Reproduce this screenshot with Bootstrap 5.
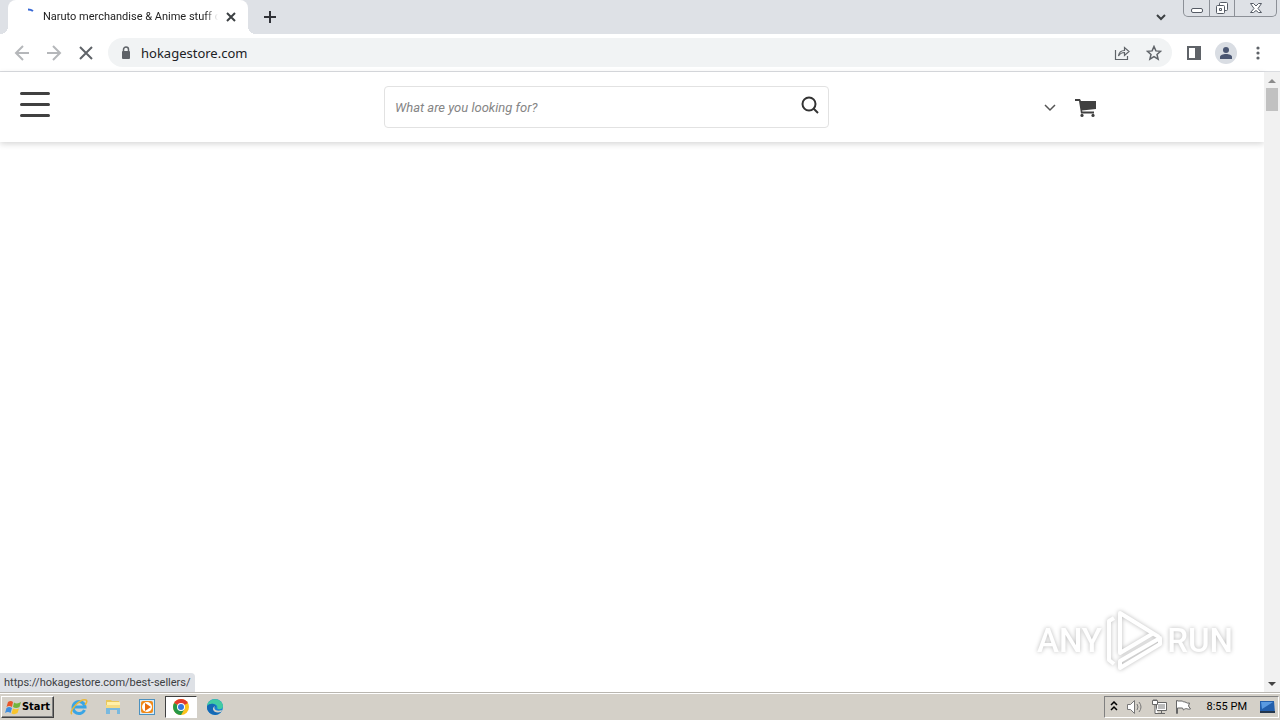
<!DOCTYPE html>
<html lang="en">
<head>
<meta charset="utf-8">
<meta name="viewport" content="width=device-width, initial-scale=1">
<title>Naruto merchandise &amp; Anime stuff</title>
<link href="https://cdn.jsdelivr.net/npm/bootstrap@5.3.0/dist/css/bootstrap.min.css" rel="stylesheet">
<style>
body { font-family: Roboto, "Open Sans", sans-serif; font-size: 11px; line-height: 16px; color: #222; background: #fff; }
button { border: 0; padding: 0; background: none; color: inherit; display: flex; align-items: center; justify-content: center; flex-shrink: 0; }
svg { display: block; flex-shrink: 0; }
.tab-strip { height: 34px; background: #dee1e6; padding-left: 8px; }
.page-tab { position: relative; width: 240px; background: #fff; border-radius: 8px 8px 0 0; padding: 0 8px; }
.page-tab::before, .page-tab::after { content: ""; position: absolute; bottom: 0; width: 8px; height: 8px; }
.page-tab::before { left: -8px; background: radial-gradient(circle at 0 0, transparent 8px, #fff 8px); }
.page-tab::after { right: -8px; background: radial-gradient(circle at 100% 0, transparent 8px, #fff 8px); }
.tab-name { width: 177px; -webkit-mask-image: linear-gradient(90deg, #000 162px, transparent); mask-image: linear-gradient(90deg, #000 162px, transparent); }
.win-buttons { height: 17px; border: 1px solid #8c9097; border-top: 0; border-radius: 0 0 5px 5px; margin-right: 3px; }
.win-buttons button { width: 25px; height: 16px; }
.win-buttons button + button { border-left: 1px solid #8c9097; }
.win-buttons button:last-child { width: 42px; }
.tool-bar { height: 38px; border-bottom: 1px solid #dadce0; padding: 0 6px; }
.tool-bar button { width: 32px; height: 32px; }
.tool-bar .panel-toggle { margin-left: 6px; }
.omnibox { height: 29px; border-radius: 15px; background: #f1f3f4; margin-left: 6px; padding: 0 2px 0 12px; }
.omnibox input { border: 0; background: none; outline: 0; font: 13px/20px "Noto Sans", sans-serif; color: #202124; padding: 0 0 0 9px; min-width: 0; }
.avatar { width: 22px; height: 22px; border-radius: 50%; background: #d9dde3; overflow: hidden; }
.site-head { height: 70px; box-shadow: 0 2px 6px rgba(0,0,0,.16); }
.search-box { width: 445px; height: 42px; border: 1px solid #e2e2e2; border-radius: 4px; padding: 0 9px 0 10px; }
.search-box input { border: 0; outline: 0; background: none; font: italic 13px/20px Roboto, sans-serif; padding: 2px 0 0; min-width: 0; }
.search-box input::placeholder { color: #858585; opacity: 1; }
.head-side { flex: 1 1 0; }
.head-right { width: 435px; padding-left: 213px; }
.scroll-rail { width: 16px; background: #f1f1f1; }
.scroll-rail button { width: 16px; height: 16px; }
.thumb { width: 12px; height: 23px; background: #c1c1c1; }
.status-note { left: 0; bottom: 0; height: 19px; width: 195px; padding: 2px 4px; background: #dee1e6; border-radius: 0 4px 0 0; color: #3c4043; }
.brand-mark { right: 47px; bottom: 20px; width: 196px; color: #fff; font: 500 33px/58px Roboto, sans-serif; filter: drop-shadow(0 0 2px rgba(0,0,0,.28)); }
.task-bar { height: 28px; background: #d4d0c8; border-top: 1px solid #b9b6b0; box-shadow: inset 0 1px #fff; padding: 1px 0 0 1px; color: #000; }
.raised { width: 53px; height: 22px; border: 1px solid; border-color: #fff #404040 #404040 #fff; box-shadow: inset -1px -1px #808080; font: bold 11px/16px "DejaVu Sans Condensed", sans-serif; }
.task-icon { width: 34px; height: 22px; }
.task-icon.active { width: 32px; background: #fff; border: 1px solid; border-color: #404040 #fff #fff #404040; margin: 0 1px; }
.tray { height: 22px; border: 1px solid; border-color: #808080 #fff #fff #808080; padding: 0 2px 0 5px; margin-right: 1px; }
</style>
</head>
<body class="d-flex flex-column vh-100 overflow-hidden">
<header>
  <div class="tab-strip d-flex align-items-stretch">
    <div class="page-tab d-flex align-items-center">
      <svg width="27" height="20" viewBox="0 0 27 20"><path d="M12 2.500Q15 2.500 17 4" fill="none" stroke="#3969d5" stroke-width="2"/></svg>
      <div class="tab-name overflow-hidden text-nowrap">Naruto merchandise &amp; Anime stuff on</div>
      <button aria-label="Close tab" class="ms-1"><svg width="18" height="16"><path d="m5 4 8 8m0-8-8 8" stroke="#3c4043" stroke-width="2"/></svg></button>
    </div>
    <button class="ms-2 px-1" aria-label="New tab"><svg width="20" height="16"><path d="M10 2v12M4 8h12" stroke="#303238" stroke-width="2"/></svg></button>
    <div class="ms-auto d-flex align-items-start">
      <button class="align-self-center me-3" aria-label="Search tabs"><svg width="12" height="10"><path d="m2 3 4 4 4-4" fill="none" stroke="#3c4043" stroke-width="2"/></svg></button>
      <div class="win-buttons d-flex">
        <button aria-label="Minimize"><svg width="14" height="14"><rect x="1.500" y="7.500" width="11" height="4" rx="1.500" fill="#fff" stroke="#555b65"/></svg></button>
        <button aria-label="Restore"><svg width="14" height="14" fill="#fff" stroke="#555b65"><rect x="4.500" y="1.500" width="8" height="8" rx="1"/><rect x="1.500" y="4.500" width="8" height="8" rx="1"/><path d="M4.500 7.500h2v2h-2z"/></svg></button>
        <button aria-label="Close"><svg width="14" height="14"><path d="M1.500 2.500h3L7 5l2.500-2.500h3L9 7.500l3.500 4h-3L7 9.500l-2.500 2h-3l3.500-4z" fill="#fff" stroke="#555b65"/></svg></button>
      </div>
    </div>
  </div>
  <div class="tool-bar d-flex align-items-center">
    <button aria-label="Back"><svg width="16" height="16" fill="none" stroke="#b5b7ba" stroke-width="2"><path d="M15 8H2m7-7L2 8l7 7"/></svg></button>
    <button aria-label="Forward"><svg width="16" height="16" fill="none" stroke="#b5b7ba" stroke-width="2"><path d="M1 8h13M7 1l7 7-7 7"/></svg></button>
    <button aria-label="Stop"><svg width="16" height="16"><path d="m2 2 12 12M14 2 2 14" stroke="#5f6368" stroke-width="2"/></svg></button>
    <div class="omnibox d-flex align-items-center flex-grow-1">
      <svg width="12" height="14"><rect x="2" y="5" width="8" height="8" rx="1" fill="#5f6368"/><path d="M3.500 6V3.500a2.500 2.500 0 0 1 5 0V6" fill="none" stroke="#5f6368" stroke-width="1.500"/></svg>
      <input class="flex-grow-1" type="text" aria-label="Address" value="hokagestore.com">
      <button aria-label="Share"><svg width="16" height="16" fill="none" stroke="#5f6368" stroke-width="1.200"><path d="M1.500 5v9.500h12V11M4.500 11c.5-4 2.500-5.500 6-5.500v-3l4.500 4-4.500 4v-3c-3 0-4.500 1-6 3.500z"/></svg></button>
      <button aria-label="Bookmark"><svg width="16" height="16"><path d="m8 1.500 1.900 4.400 4.700.4-3.600 3.100 1.100 4.700L8 11.600l-4.100 2.500L5 9.400 1.400 6.300l4.700-.4z" fill="none" stroke="#5f6368" stroke-width="1.500"/></svg></button>
    </div>
    <button class="panel-toggle" aria-label="Side panel"><svg width="16" height="16"><path d="M1 1h14v14H1zm2 2v10h6V3z" fill="#5f6368" fill-rule="evenodd"/></svg></button>
    <button aria-label="Profile"><span class="avatar"><svg width="22" height="22" fill="#4a5672"><circle cx="11" cy="8" r="3"/><path d="M5 17v-2c0-4 12-4 12 0v2z"/></svg></span></button>
    <button aria-label="Menu"><svg width="16" height="16" fill="#5f6368"><circle cx="8" cy="3" r="1.600"/><circle cx="8" cy="8" r="1.600"/><circle cx="8" cy="13" r="1.600"/></svg></button>
  </div>
</header>
<div class="d-flex flex-grow-1 position-relative">
  <main class="flex-grow-1">
    <div class="site-head d-flex align-items-center">
      <div class="head-side"><button class="ms-3 px-1 pb-1" aria-label="Open menu"><svg width="30" height="26"><path d="M1.500 1.500h27m-27 11h27m-27 11h27" stroke="#404040" stroke-width="3" stroke-linecap="round"/></svg></button></div>
      <form class="search-box d-flex align-items-center">
        <input class="flex-grow-1" type="search" aria-label="Search products" placeholder="What are you looking for?">
        <button type="button" class="pb-1" aria-label="Search"><svg width="18" height="18" fill="none" stroke="#333" stroke-width="2"><circle cx="8" cy="8" r="6.500"/><path d="m12.500 12.500 4.500 4.500"/></svg></button>
      </form>
      <div class="head-right d-flex align-items-center gap-3">
        <button aria-label="Choose currency"><svg width="16" height="12"><path d="m3 4 5 5 5-5" fill="none" stroke="#555" stroke-width="1.500"/></svg></button>
        <button aria-label="Cart"><svg width="24" height="20" viewBox="0 0 24 20" fill="#404040"><path d="M1 2h5l1 2h15v8L8 13.500 8.400 14.500H20v2H7L5 4H1z"/><circle cx="8" cy="18.400" r="1.600"/><circle cx="19" cy="18.400" r="1.600"/></svg></button>
      </div>
    </div>
  </main>
  <div class="scroll-rail d-flex flex-column align-items-center">
    <button aria-label="Scroll up"><svg width="8" height="5"><path d="M0 5 4 1l4 4z" fill="#8c8c8c"/></svg></button>
    <div class="thumb"></div>
    <button class="mt-auto" aria-label="Scroll down"><svg width="8" height="5"><path d="m0 0 4 4 4-4z" fill="#444"/></svg></button>
  </div>
  <div class="status-note position-absolute text-nowrap">https://hokagestore.com/best-sellers/</div>
  <div class="brand-mark position-absolute d-flex align-items-center justify-content-between">
    <span>ANY</span>
    <svg width="58" height="62" viewBox="0 0 58 62" fill="none" stroke="#fff" stroke-width="4" stroke-linejoin="round"><path d="M14 43V3l39 24M14 11v32l32-19M8 8 3 11v39l5 4M14 58l40-24v-6L14 51z"/></svg>
    <span>RUN</span>
  </div>
</div>
<footer class="task-bar d-flex align-items-center">
  <button class="raised"><svg width="17" height="16"><path d="M3 3q3-2 5 0L7 8Q4 6 1.500 8z" fill="#e8562a"/><path d="M9 3.500q3 2 7-.5l-1.500 5Q11 10 8 8z" fill="#72b53c"/><path d="M1.500 9Q4 7 7 9l-1.500 5Q3 12 0 14z" fill="#3e8ee0"/><path d="M8 9.500q3 1.500 6 0l-1.500 4.500q-3 2-6 .5z" fill="#f8c42c"/></svg>Start</button>
  <button class="task-icon ms-2" aria-label="Internet Explorer"><svg width="18" height="18" fill="none"><path d="M14.500 12A6 6 0 1 1 15 9H4" stroke="#39a5e5" stroke-width="3"/><path d="M2 16C-2 14 10 0 16 2q2 1-1 5" stroke="#e9b83a" stroke-width="1.500"/></svg></button>
  <button class="task-icon" aria-label="File Explorer"><svg width="18" height="18"><path d="M2 2h5l1 1h7v9H2z" fill="#e9c75b"/><path d="M3 4h13v5H3z" fill="#fff0a9"/><path d="M2 8h14v8h-3v-4H6v4H2z" fill="#79b9df"/><path d="M2 7h14v3H2z" fill="#f5dc84"/></svg></button>
  <button class="task-icon" aria-label="Media Player"><svg width="18" height="18"><rect x="1.500" y="1.500" width="15" height="15" fill="#d8ecf9" stroke="#4c91bf"/><rect x="3" y="3" width="12" height="12" rx="2" fill="#f18a18"/><circle cx="9" cy="9" r="5" fill="#fff"/><path d="m7 5 6 4-6 4z" fill="#e86c0b"/></svg></button>
  <button class="task-icon active" aria-label="Chrome"><svg width="16" height="16"><circle cx="8" cy="8" r="8" fill="#fcc31d"/><path d="M8 8 1.100 4a8 8 0 0 1 13.800 0z" fill="#e33b2e"/><path d="M8 8 1.100 4A8 8 0 0 0 8 16l3.500-6z" fill="#279847"/><circle cx="8" cy="8" r="4" fill="#fff"/><circle cx="8" cy="8" r="3" fill="#3577df"/></svg></button>
  <button class="task-icon" aria-label="Edge"><svg width="16" height="16"><circle cx="8" cy="8" r="8" fill="#1685d1"/><path d="M0 7C1-2 15-2 16 7c0 4-5 4-6 2 2-3-5-7-10-2z" fill="#42cba3"/><path d="M0 7c4-4 9-2 9 1-4 0-3 6 5 5A8 8 0 0 1 0 7z" fill="#1469b5"/><path d="M8 7c-2 3 1 6 7 4l-1 2C6 15 4 9 8 7z" fill="#d4d0c8"/></svg></button>
  <div class="tray d-flex align-items-center ms-auto">
    <button class="me-2" aria-label="Show hidden icons"><svg width="8" height="12" fill="none" stroke="#000" stroke-width="1.500"><path d="m1 4 3-3 3 3M1 9l3-3 3 3"/></svg></button>
    <button class="me-2" aria-label="Volume"><svg width="17" height="16"><path d="M1.500 5.500h3l4-4v13l-4-4h-3z" fill="#fff" stroke="#777"/><path d="M11 5q2 3 0 6m2-8q4 5 0 10" fill="none" stroke="#777"/></svg></button>
    <button class="me-2" aria-label="Network"><svg width="16" height="16" fill="#fff" stroke="#666"><path d="M5.500 3.500h10v8h-10zM7 14.500h7M10.500 12v2"/><path d="M7 5h7v5H7z" fill="#bbb" stroke="none"/><path d="M1.500 1.500h5v4h-5zM4 6v8.500h3M3 0v2m2-2v2"/></svg></button>
    <button class="me-3" aria-label="Action Center"><svg width="16" height="16"><path d="M1.500 1.500v13h1V9h5l1 2c3-3 4 0 7-1l-2-3 1-3c-3 1-4-2-6-1l-1-1h-5v-.500z" fill="#fff" stroke="#666"/></svg></button>
    <time class="me-2 pe-1">8:55 PM</time>
    <button aria-label="Show desktop"><svg width="17" height="14"><path d="M1 1h14l1 12H1z" fill="#235fac"/><path d="M2 2h12L3 9z" fill="#5a9ae1"/><path d="M1 11h15v2H1z" fill="#24364c"/></svg></button>
  </div>
</footer>
<script src="https://cdn.jsdelivr.net/npm/bootstrap@5.3.0/dist/js/bootstrap.bundle.min.js"></script>
</body>
</html>
